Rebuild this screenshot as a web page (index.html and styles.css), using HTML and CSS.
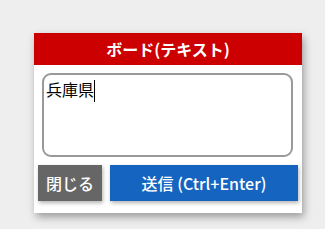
FILE: index.html
```html
<!DOCTYPE html>
<html lang="ja">
<head>
<meta charset="utf-8">
<link rel="stylesheet" href="styles.css">
</head>
<body>
<div class="panel">
  <div class="header">ボード(テキスト)</div>
  <div class="body">
    <div class="input"><span class="value">兵庫県</span><span class="caret"></span></div>
  </div>
  <div class="actions">
    <button class="btn close">閉じる</button>
    <button class="btn send">送信 (Ctrl+Enter)</button>
  </div>
</div>
</body>
</html>
```
FILE: styles.css
```css
html, body {
  margin: 0;
  padding: 0;
  background: #eeeeee;
  width: 325px;
  height: 229px;
  overflow: hidden;
}
body {
  font-family: "Noto Sans CJK JP", "Noto Sans", sans-serif;
  padding: 33px 0 0 34px;
  box-sizing: border-box;
}
.panel {
  width: 268px;
  background: #ffffff;
  box-shadow: 2px 4px 8px rgba(0,0,0,0.35);
}
.header {
  height: 32px;
  background: #cc0000;
  color: #ffffff;
  font-weight: 700;
  font-size: 16px;
  line-height: 32px;
  text-align: center;
}
.body {
  padding: 8px 9px 0 8px;
}
.input {
  height: 84px;
  box-sizing: border-box;
  border: 2px solid #999999;
  border-radius: 9px;
  padding: 2px 2px;
  font-size: 16px;
  line-height: 24px;
  color: #000;
  display: flex;
  align-items: flex-start;
}
.caret {
  display: inline-block;
  width: 1px;
  height: 22px;
  margin-top: 3px;
  background: #000;
}
.actions {
  display: flex;
  gap: 8px;
  padding: 8px 4px 12px 4px;
}
.btn {
  border: none;
  height: 36px;
  color: #ffffff;
  font-family: "Noto Sans CJK JP", "Noto Sans", sans-serif;
  font-weight: 500;
  font-size: 16px;
  padding: 0;
  box-shadow: 1px 2px 4px rgba(0,0,0,0.3);
}
.close {
  width: 64px;
  background: #666666;
}
.send {
  flex: 1;
  background: #1565c0;
}
```
